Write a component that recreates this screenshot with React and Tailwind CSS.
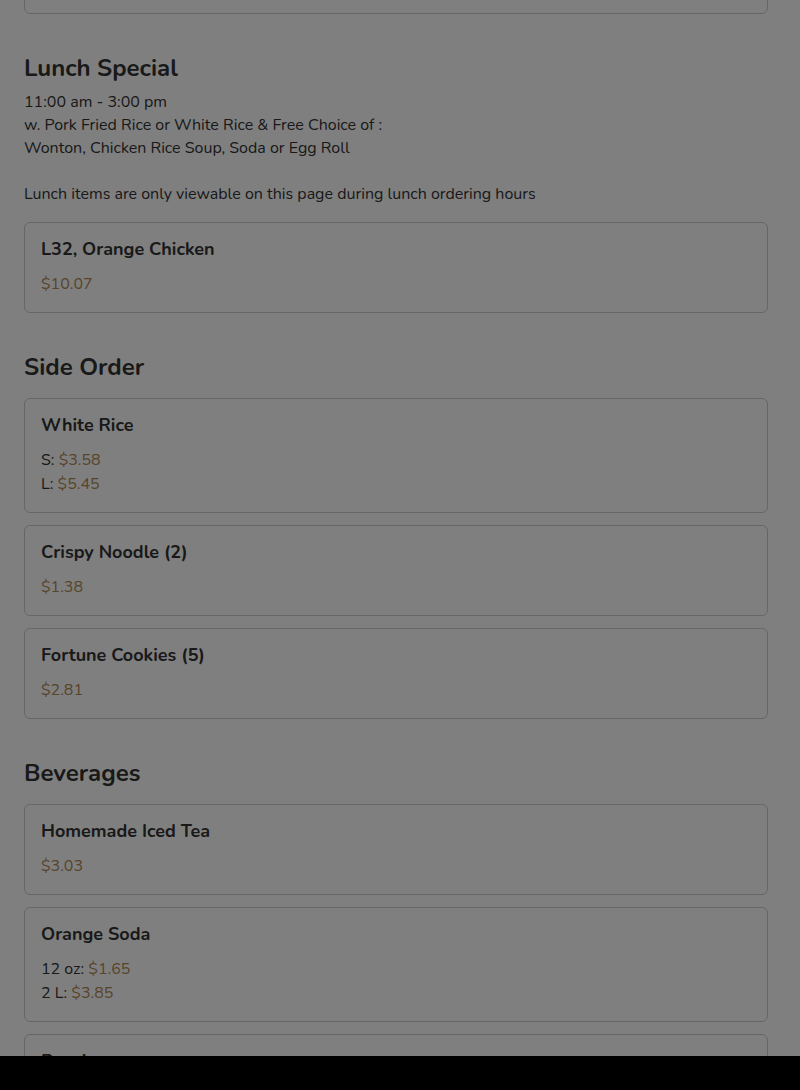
import React from "react";

const font = { fontFamily: "Nunito, Lato, 'Noto Sans', sans-serif" };

function Card({ title, children }) {
  return (
    <div className="w-[744px] rounded-md border border-[#cccccc] bg-white px-4 pt-[13px] pb-4">
      <div className="text-[18px] leading-[27px] font-bold text-[#333333]">{title}</div>
      <div className="mt-[9px] text-[16px] leading-6 text-[#333333]">{children}</div>
    </div>
  );
}

const Price = ({ children }) => <span className="text-[#b08a55]">{children}</span>;

function Section({ title, children }) {
  return (
    <div className="mt-[36px]">
      <h2 className="text-[24px] leading-9 font-bold text-[#333333]">{title}</h2>
      {children}
    </div>
  );
}

export default function App() {
  return (
    <div style={font} className="relative h-[1090px] overflow-hidden bg-white">
      <div className="pl-6 pb-20">
        <div className="-mt-[77px] h-[91px] w-[744px] rounded-md border border-[#cccccc] bg-white" />

        <Section title="Lunch Special">
          <div className="mt-[5px] text-[16px] leading-[23px] text-[#333333]">
            <div>11:00 am - 3:00 pm</div>
            <div>w. Pork Fried Rice or White Rice &amp; Free Choice of :</div>
            <div>Wonton, Chicken Rice Soup, Soda or Egg Roll</div>
            <div className="h-[23px]" />
            <div>Lunch items are only viewable on this page during lunch ordering hours</div>
          </div>
          <div className="mt-[16px]">
            <Card title="L32, Orange Chicken">
              <Price>$10.07</Price>
            </Card>
          </div>
        </Section>

        <Section title="Side Order">
          <div className="mt-[13px] flex flex-col gap-[12px]">
            <Card title="White Rice">
              <div>S: <Price>$3.58</Price></div>
              <div>L: <Price>$5.45</Price></div>
            </Card>
            <Card title="Crispy Noodle (2)">
              <Price>$1.38</Price>
            </Card>
            <Card title="Fortune Cookies (5)">
              <Price>$2.81</Price>
            </Card>
          </div>
        </Section>

        <Section title="Beverages">
          <div className="mt-[13px] flex flex-col gap-[12px]">
            <Card title="Homemade Iced Tea">
              <Price>$3.03</Price>
            </Card>
            <Card title="Orange Soda">
              <div>12 oz: <Price>$1.65</Price></div>
              <div>2 L: <Price>$3.85</Price></div>
            </Card>
            <Card title="Pepsi">
              <div>12 oz: <Price>$1.65</Price></div>
              <div>2 L: <Price>$3.85</Price></div>
            </Card>
          </div>
        </Section>
      </div>

      <div className="fixed inset-0 bg-black/50" />
      <div className="fixed inset-x-0 bottom-0 h-[34px] bg-black" />
    </div>
  );
}
